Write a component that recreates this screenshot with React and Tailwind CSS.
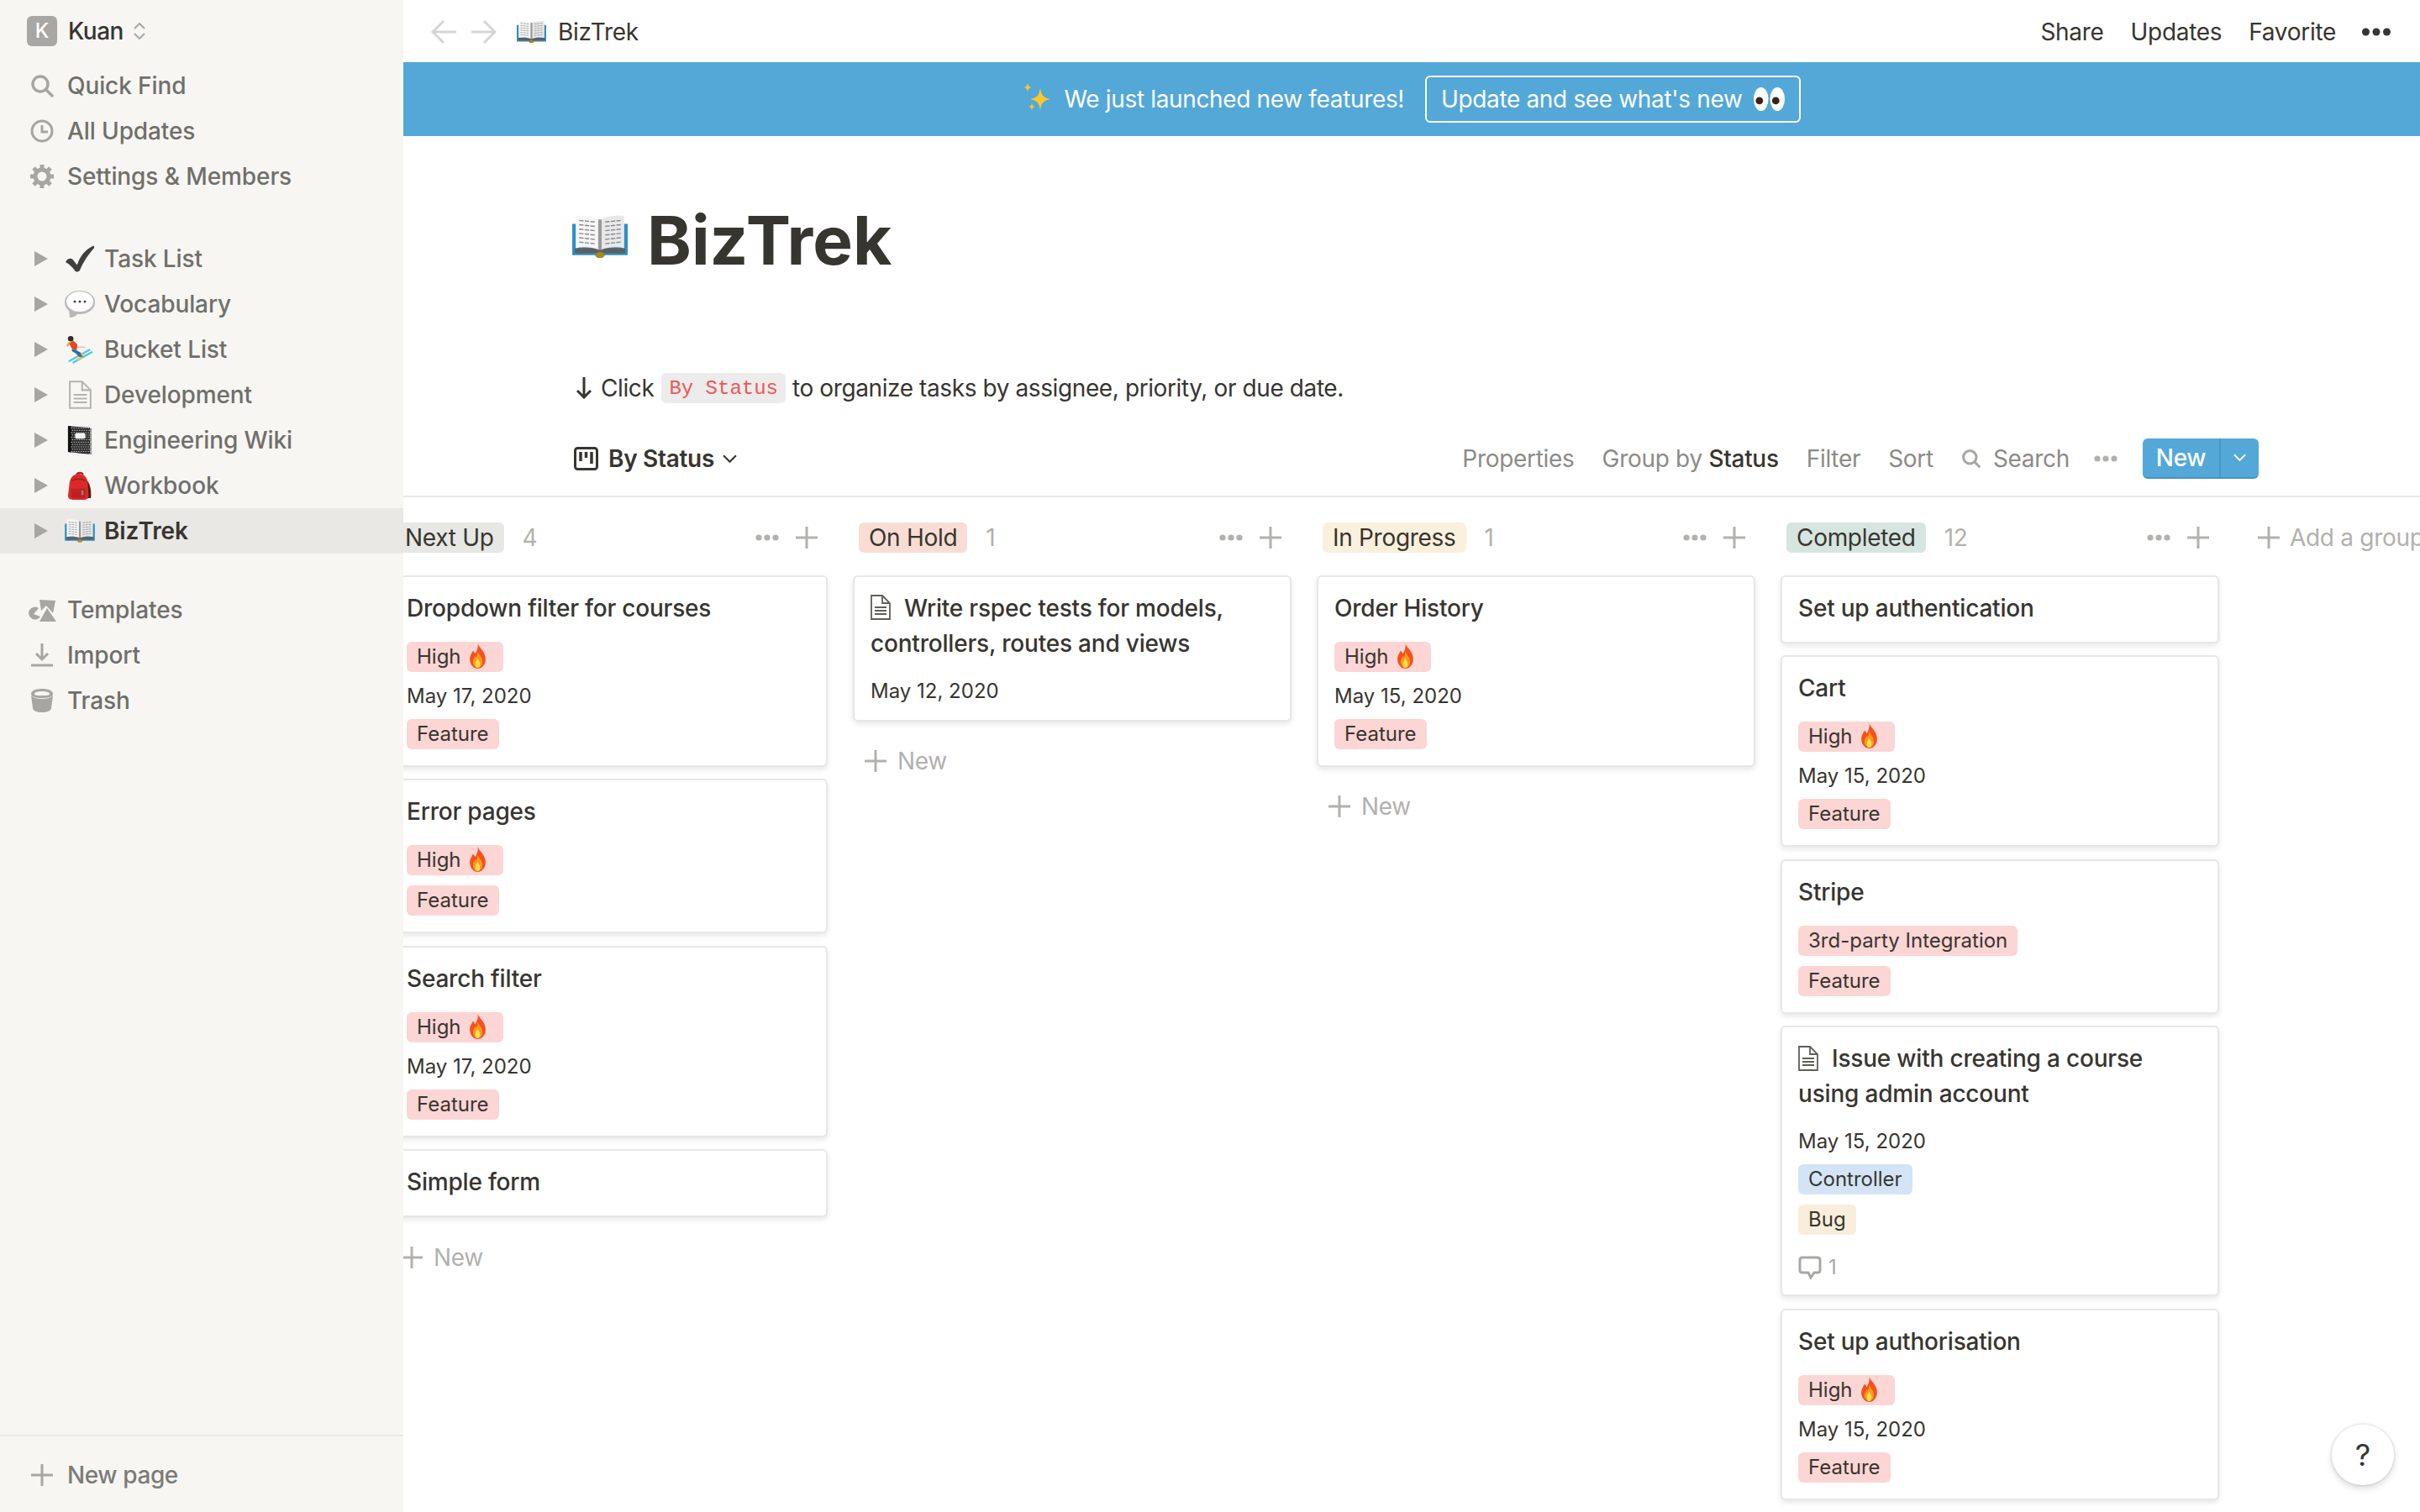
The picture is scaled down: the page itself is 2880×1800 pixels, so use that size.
import React from 'react'

const ink = '#37352f'

function Book({ className }) {
  return (
    <svg className={className} viewBox="0 0 64 52" fill="none">
      <path d="M0 10h64v36H38l-3 3h-6l-3-3H0z" fill="#2f8fc4" />
      <path d="M3 38h58v6H37l-2 1h-6l-2-1H3z" fill="#5f5f5f" />
      <path d="M4 1c9-1 20 0 27 4v35c-8-3-18-4-27-2z" fill="#f6f6f6" />
      <path d="M60 1c-9-1-20 0-27 4v35c8-3 18-4 27-2z" fill="#e8e8e8" />
      <path d="M30 5h4v35h-4z" fill="#9a9a9a" />
      <g stroke="#8a8a8a" strokeWidth="1.400" strokeDasharray="5 1.500">
        <path d="M8 6l19 2M8 11l19 2M8 16l19 2M8 21l19 2M8 26l19 2M8 31l19 2" />
        <path d="M56 6l-19 2M56 11l-19 2M56 16l-19 2M56 21l-19 2M56 26l-19 2M56 31l-19 2" />
      </g>
      <ellipse cx="32" cy="46" rx="5" ry="3.500" fill="#a88a1c" />
    </svg>
  )
}

function Sparkles({ className }) {
  return (
    <svg className={className} viewBox="0 0 34 44" fill="#fcc62d">
      <path d="M21 8c1 9 3 12 12 14-9 2-11 5-12 14-1-9-3-12-12-14 9-2 11-5 12-14z" />
      <path d="M6 2c.5 4 1.500 5.500 5 6-3.500.5-4.500 2-5 6-.5-4-1.500-5.500-5-6 3.500-.5 4.500-2 5-6z" />
      <path d="M11 26c.5 3.500 1.200 4.500 4 5-2.800.5-3.500 1.500-4 5-.5-3.500-1.200-4.500-4-5 2.800-.5 3.500-1.500 4-5z" />
    </svg>
  )
}

function Eyes({ className }) {
  return (
    <svg className={className} viewBox="0 0 38 30">
      <ellipse cx="9" cy="15" rx="9" ry="14.500" fill="#fff" />
      <ellipse cx="29" cy="15" rx="9" ry="14.500" fill="#fff" />
      <circle cx="7" cy="17" r="4.500" fill="#3b2412" />
      <circle cx="27" cy="17" r="4.500" fill="#3b2412" />
    </svg>
  )
}

function Fire({ className }) {
  return (
    <svg className={className} viewBox="0 0 24 32">
      <path d="M12 0c2 6 10 10 10 20 0 7-5 12-10 12S2 27 2 20c0-5 3-8 4-11 2 2 3 4 3 4 2-4 4-8 3-13z" fill="#f4511e" />
      <path d="M12 10c1 4 6 7 6 13 0 5-3 8-6 8s-6-3-6-8c0-3 2-5 3-7 1 1 1 2 1 2 1-2 2-5 2-8z" fill="#fb9a1c" />
      <path d="M12 19c1 3 3 4 3 7s-1.500 5-3 5-3-2-3-5 2-4 3-7z" fill="#ffe04a" />
    </svg>
  )
}

function Skier({ className }) {
  return (
    <svg className={className} viewBox="0 0 36 36">
      <path d="M4 33L31 18M9 35l25-14" stroke="#4fc8ec" strokeWidth="2.500" />
      <path d="M13 15h12" stroke="#d9b0a6" strokeWidth="1.200" />
      <circle cx="6.500" cy="4.500" r="3.500" fill="#2f2a28" />
      <path d="M4 10l6-3 5 5-1 7-6-2z" fill="#e4491f" />
      <path d="M8 17l6 2 5 3 3 5-4 1-5-5-5-3z" fill="#2f6ea8" />
      <path d="M2 14l3-5" stroke="#e9a33a" strokeWidth="2.500" />
      <path d="M14 30l6-3 1 2-5 3zM19 24l5-2 1 2-4 2z" fill="#f2c230" />
    </svg>
  )
}

function Backpack({ className }) {
  return (
    <svg className={className} viewBox="0 0 32 36">
      <path d="M12 4c1-3 7-3 8 0" fill="none" stroke="#9c1c1c" strokeWidth="2" />
      <path d="M24 10c5 5 7 14 6 24h-5z" fill="#5b1d12" />
      <path d="M3 14C4 7 9 3 15 3s10 4 11 11l1 17c0 3-2 5-5 5H7c-3 0-6-2-6-5z" fill="#d92a2a" />
      <path d="M6 12c5-3 12-3 17 0" fill="none" stroke="#a81c1c" strokeWidth="1.500" />
      <path d="M5 22h18v9c0 2-1 3-3 3H8c-2 0-3-1-3-3z" fill="#bf2020" />
      <rect x="18" y="24" width="2.500" height="6" fill="#8a8a8a" />
    </svg>
  )
}

function Notebook({ className }) {
  const specks = []
  for (let y = 2; y < 36; y += 3) {
    for (let x = 5 + (y % 2); x < 30; x += 3) {
      specks.push(<rect key={`${x}-${y}`} x={x} y={y} width="1.500" height="1" fill="#d8d8d8" />)
    }
  }
  return (
    <svg className={className} viewBox="0 0 32 36">
      <path d="M1 0l28 2v34L1 33z" fill="#2b2b2b" />
      <path d="M29 3h2v33h-2z" fill="#8d8d8d" />
      <path d="M1 0h4v33.500l-4-.5z" fill="#111" />
      {specks}
      <rect x="10" y="9" width="13" height="7" rx="2" fill="#f4f4f4" />
    </svg>
  )
}

function Speech({ className }) {
  return (
    <svg className={className} viewBox="0 0 36 32">
      <ellipse cx="18" cy="14" rx="18" ry="14" fill="#b9b9b9" />
      <path d="M5 22l1 10c4 0 8-2 10-5z" fill="#b9b9b9" />
      <ellipse cx="18" cy="13" rx="16" ry="12" fill="#fff" />
      <circle cx="12" cy="13" r="1.500" fill="#444" />
      <circle cx="18" cy="13" r="1.500" fill="#444" />
      <circle cx="24" cy="13" r="1.500" fill="#444" />
    </svg>
  )
}

function Check({ className }) {
  return (
    <svg className={className} viewBox="0 0 32 30">
      <path d="M1 17c3-3 6-3 8 0l4 5C16 12 22 5 30 1c2-1 3 1 2 2-6 7-12 15-16 25-1 2-4 2-5 1-3-4-6-7-9-9-2-1-2-2-1-3z" fill="#3f3f3f" />
    </svg>
  )
}

function Doc({ className, color = '#5f5e59', sw = 1.800 }) {
  return (
    <svg className={className} viewBox="0 0 24 30" fill="none" stroke={color} strokeWidth={sw}>
      <path d="M1 1h13l9 9v19H1z" />
      <path d="M14 1v9h9" />
      <path d="M5 15h14M5 19h14M5 23h14" />
    </svg>
  )
}

function Dots({ className = 'w-[28px] h-[8px]', fill = '#b2b1ad' }) {
  return (
    <svg className={className} viewBox="0 0 28 8" fill={fill}>
      <circle cx="4" cy="4" r="3.600" />
      <circle cx="14" cy="4" r="3.600" />
      <circle cx="24" cy="4" r="3.600" />
    </svg>
  )
}

function Plus({ className = 'w-[26px] h-[26px]', color = '#b2b1ad' }) {
  return (
    <svg className={className} viewBox="0 0 26 26" stroke={color} strokeWidth="3">
      <path d="M13 0v26M0 13h26" />
    </svg>
  )
}

function Chevron({ className, color = ink }) {
  return (
    <svg className={className} viewBox="0 0 16 10" fill="none" stroke={color} strokeWidth="2">
      <path d="M1 1l7 7 7-7" />
    </svg>
  )
}

const navIcons = {
  search: (
    <svg className="w-[28px] h-[28px]" viewBox="0 0 28 28" fill="none" stroke="#a7a6a2" strokeWidth="3.500">
      <circle cx="12" cy="12" r="9" />
      <path d="M18.500 18.500L26 26" strokeLinecap="round" />
    </svg>
  ),
  clock: (
    <svg className="w-[28px] h-[28px]" viewBox="0 0 28 28" fill="none" stroke="#a7a6a2" strokeWidth="3">
      <circle cx="14" cy="14" r="12" />
      <path d="M14 7v8h7" />
    </svg>
  ),
  gear: (
    <svg className="w-[28px] h-[28px]" viewBox="0 0 28 28" fill="none" stroke="#a7a6a2">
      <circle cx="14" cy="14" r="8" strokeWidth="5" />
      <path d="M14 0v5M14 23v5M0 14h5M23 14h5M4 4l3.500 3.500M20.500 20.500L24 24M24 4l-3.500 3.500M7.500 20.500L4 24" strokeWidth="5" />
    </svg>
  ),
  templates: (
    <svg className="w-[34px] h-[28px]" viewBox="0 0 34 28" fill="#a7a6a2">
      <path d="M14 2l19 1-3 15-8-9-6 6z" />
      <path d="M13 12a7.500 7.500 0 1 0 2 10l-8-3z" />
      <path d="M23 12l11 16H14z" />
    </svg>
  ),
  import: (
    <svg className="w-[28px] h-[28px]" viewBox="0 0 28 28" fill="none" stroke="#a7a6a2" strokeWidth="3">
      <path d="M14 0v19M7 12l7 7 7-7M1 26h26" />
    </svg>
  ),
  trash: (
    <svg className="w-[28px] h-[28px]" viewBox="0 0 28 28" fill="#a7a6a2">
      <path d="M1 8l2 15c0 3 5 5 11 5s11-2 11-5l2-15c-3 3-8 4-13 4S4 11 1 8z" />
      <path d="M14 0C7 0 1 2 1 6s6 5 13 5 13-1 13-5-6-6-13-6zm0 3c5 0 9 1 9 3s-4 2-9 2-9 0-9-2 4-3 9-3z" />
    </svg>
  ),
}

const pages = [
  { name: 'Task List', icon: <Check className="w-[34px] h-[32px]" /> },
  { name: 'Vocabulary', icon: <Speech className="w-[36px] h-[34px]" /> },
  { name: 'Bucket List', icon: <Skier className="w-[34px] h-[36px]" /> },
  { name: 'Development', icon: <Doc className="w-[27px] h-[34px]" color="#b5b4b0" sw={1.800} /> },
  { name: 'Engineering Wiki', icon: <Notebook className="w-[30px] h-[34px]" /> },
  { name: 'Workbook', icon: <Backpack className="w-[30px] h-[34px]" /> },
  { name: 'BizTrek', icon: <Book className="w-[36px] h-[29px]" />, active: true },
]

function NavRow({ icon, label }) {
  return (
    <div className="h-[54px] flex items-center pl-[32px] gap-[12px] text-[#706f6a]">
      <span className="w-[36px] flex justify-center">{navIcons[icon]}</span>
      <span>{label}</span>
    </div>
  )
}

function Sidebar() {
  return (
    <aside className="w-[480px] shrink-0 h-full bg-[#f7f6f3] flex flex-col font-medium text-[28px] tracking-[-0.1px]">
      <div className="h-[75px] shrink-0 flex items-center pl-[32px] pb-[1px]">
        <span className="w-[36px] h-[36px] rounded-[6px] bg-[#a8a7a3] text-white flex items-center justify-center text-[24px]">K</span>
        <span className="ml-[13px] text-[#37352f] tracking-[-0.5px]">Kuan</span>
        <svg className="ml-[12px] w-[14px] h-[20px]" viewBox="0 0 14 20" fill="none" stroke="#a7a6a2" strokeWidth="2">
          <path d="M1 7l6-6 6 6M1 13l6 6 6-6" />
        </svg>
      </div>
      <NavRow icon="search" label="Quick Find" />
      <NavRow icon="clock" label="All Updates" />
      <NavRow icon="gear" label="Settings & Members" />

      <div className="mt-[44px]">
        {pages.map((page) => (
          <div key={page.name} className={`h-[54px] flex items-center pl-[41px] ${page.active ? 'bg-[#e9e8e5] text-[#37352f] font-semibold' : 'text-[#706f6a]'}`}>
            <span className="w-0 h-0 border-y-[9px] border-y-transparent border-l-[16px] border-l-[#a7a6a2]" />
            <span className="ml-[20px] w-[36px] h-[36px] flex items-center justify-center">{page.icon}</span>
            <span className="ml-[11px]">{page.name}</span>
          </div>
        ))}
      </div>

      <div className="mt-[40px]">
        <NavRow icon="templates" label="Templates" />
        <NavRow icon="import" label="Import" />
        <NavRow icon="trash" label="Trash" />
      </div>

      <div className="mt-auto h-[92px] border-t-2 border-[#e8e7e4] flex items-center pl-[37px] pt-[2px] gap-[17px] text-[#7c7b77]">
        <Plus color="#a7a6a2" />
        <span className="tracking-[-0.4px]">New page</span>
      </div>
    </aside>
  )
}

function Tag({ color, children }) {
  return (
    <span className={`inline-flex items-center self-start h-[36px] rounded-[6px] px-[12px] text-[24px] text-[#37352f] ${color}`}>
      {children}
    </span>
  )
}

function High() {
  return (
    <Tag color="bg-[#fcd5d5]">
      High
      <Fire className="ml-[8px] mr-[7px] -mt-[2px] w-[23px] h-[30px]" />
    </Tag>
  )
}

const Feature = () => <Tag color="bg-[#fcd5d5]">Feature</Tag>
const DateRow = ({ children }) => <span className="h-[32px] pt-[2px] flex items-center text-[24px] text-[#37352f]">{children}</span>

function Card({ title, doc, children }) {
  return (
    <div className="shrink-0 rounded-[6px] border-2 border-[#e7e7e6] bg-white px-[19px] pt-[16px] pb-[19px] shadow-[0_3px_6px_rgba(15,15,15,0.1)]">
      <div className="text-[28px] leading-[42px] font-medium tracking-[-0.2px] text-[#37352f]">
        {doc && <Doc className="inline-block w-[24px] h-[30px] mr-[16px] -mt-[6px] align-middle" />}
        {title}
      </div>
      {children && <div className="mt-[19px] flex flex-col gap-[12px]">{children}</div>}
    </div>
  )
}

function Column({ label, color, count, children, newRow, className = 'w-[522px]' }) {
  return (
    <div className={`shrink-0 flex flex-col ${className}`}>
      <div className="h-[36px] pl-[7px] pr-[12px] flex items-center text-[28px] tracking-[-0.3px]">
        <span className={`h-[36px] rounded-[6px] px-[12px] flex items-center text-[#37352f] ${color}`}>{label}</span>
        <span className="ml-[22px] text-[#b2b1ad]">{count}</span>
        <span className="ml-auto flex items-center gap-[20px]">
          <Dots />
          <Plus />
        </span>
      </div>
      <div className="mt-[27px] flex flex-col gap-[14.4px]">{children}</div>
      {newRow && (
        <div className="h-[66px] mt-[14.4px] flex items-center pl-[14px] gap-[13px] text-[28px] tracking-[-0.3px] text-[#b2b1ad]">
          <Plus />
          <span>New</span>
        </div>
      )}
    </div>
  )
}

function Board() {
  return (
    <div className="flex gap-[30px] -ml-[17px] mt-[30px] flex-1 min-h-0">
      <Column label="Next Up" color="bg-[#e7e7e5]" count="4" newRow>
        <Card title="Dropdown filter for courses">
          <High />
          <DateRow>May 17, 2020</DateRow>
          <Feature />
        </Card>
        <Card title="Error pages">
          <High />
          <Feature />
        </Card>
        <Card title="Search filter">
          <High />
          <DateRow>May 17, 2020</DateRow>
          <Feature />
        </Card>
        <Card title="Simple form" />
      </Column>

      <Column label="On Hold" color="bg-[#f9ddd4]" count="1" newRow>
        <Card doc title="Write rspec tests for models, controllers, routes and views">
          <DateRow>May 12, 2020</DateRow>
        </Card>
      </Column>

      <Column label="In Progress" color="bg-[#faf0dd]" count="1" newRow>
        <Card title="Order History">
          <High />
          <DateRow>May 15, 2020</DateRow>
          <Feature />
        </Card>
      </Column>

      <Column label="Completed" color="bg-[#d6e5e0]" count="12">
        <Card title="Set up authentication" />
        <Card title="Cart">
          <High />
          <DateRow>May 15, 2020</DateRow>
          <Feature />
        </Card>
        <Card title="Stripe">
          <Tag color="bg-[#fcd5d5]">3rd-party Integration</Tag>
          <Feature />
        </Card>
        <Card doc title="Issue with creating a course using admin account">
          <DateRow>May 15, 2020</DateRow>
          <Tag color="bg-[#d3e4f6]">Controller</Tag>
          <Tag color="bg-[#f9eedb]">Bug</Tag>
          <div className="mt-[14px] h-[26px] flex items-center gap-[8px] text-[24px] text-[#a9a8a4]">
            <svg className="w-[28px] h-[28px]" viewBox="0 0 28 28" fill="none" stroke="#a9a8a4" strokeWidth="3">
              <path d="M5 2h18c2 0 3 1 3 3v12c0 2-1 3-3 3h-4l-4 6-3-6H5c-2 0-3-1-3-3V5c0-2 1-3 3-3z" />
            </svg>
            1
          </div>
        </Card>
        <Card title="Set up authorisation">
          <High />
          <DateRow>May 15, 2020</DateRow>
          <Feature />
        </Card>
        <div className="h-[100px] shrink-0 rounded-[6px] border-2 border-[#e7e7e6] bg-white" />
      </Column>

      <div className="shrink-0 ml-[16px] h-[36px] flex items-center gap-[12px] text-[28px] tracking-[-0.3px] text-[#b2b1ad]">
        <Plus />
        <span>Add a group</span>
      </div>
    </div>
  )
}

function Main() {
  return (
    <main className="flex-1 min-w-0 h-full flex flex-col overflow-hidden relative">
      <header className="h-[74px] shrink-0 pt-[2px] flex items-center pl-[33px] pr-[34px] text-[28px] tracking-[-0.3px] text-[#37352f]">
        <svg className="w-[30px] h-[28px]" viewBox="0 0 30 28" fill="none" stroke="#d7d6d4" strokeWidth="3">
          <path d="M30 14H3M15 1L2 14l13 13" />
        </svg>
        <svg className="ml-[18px] w-[30px] h-[28px]" viewBox="0 0 30 28" fill="none" stroke="#d7d6d4" strokeWidth="3">
          <path d="M0 14h27M15 1l13 13-13 13" />
        </svg>
        <Book className="ml-[24px] w-[35px] h-[29px]" />
        <span className="ml-[14px]">BizTrek</span>
        <div className="ml-auto flex items-center gap-[32px]">
          <span>Share</span>
          <span>Updates</span>
          <span>Favorite</span>
          <Dots className="ml-[-2px] w-[36px] h-[10px]" fill="#37352f" />
        </div>
      </header>

      <div className="h-[88px] shrink-0 bg-[#53a8d8] flex items-center justify-center text-[28px] tracking-[-0.35px] text-white">
        <Sparkles className="w-[34px] h-[44px]" />
        <span className="ml-[16px]">We just launched new features!</span>
        <span className="ml-[25px] h-[56px] rounded-[6px] border-2 border-white flex items-center pl-[17px] pr-[17px]">
          Update and see what's new
          <Eyes className="ml-[14px] w-[37px] h-[30px]" />
        </span>
      </div>

      <div className="shrink-0 pl-[200px] pr-[192px] text-[#37352f]">
        <h1 className="mt-[76px] h-[96px] flex items-center text-[80px] font-bold">
          <Book className="w-[66px] h-[54px] -mt-[6px] ml-[1px]" />
          <span className="ml-[23px]">BizTrek</span>
        </h1>
        <div className="mt-[107px] h-[42px] pl-[6px] flex items-center text-[28px] tracking-[-0.4px]">
          <svg className="w-[18px] h-[26px]" viewBox="0 0 18 26" fill="none" stroke="#37352f" strokeWidth="3">
            <path d="M9 0v24M1 16l8 8 8-8" />
          </svg>
          <span className="ml-[11px]">Click</span>
          <code className="ml-[9px] h-[36px] pt-[2px] rounded-[6px] bg-[#ebeceb] px-[9px] flex items-center [font-family:'Liberation_Mono',monospace] text-[24px] tracking-normal text-[#eb5757]">By Status</code>
          <span className="ml-[8px]">to organize tasks by assignee, priority, or due date.</span>
        </div>
        <div className="mt-[39px] h-[48px] pl-[3px] flex items-center text-[28px] tracking-[-0.3px] text-[#8c8b87]">
          <svg className="w-[29px] h-[28px]" viewBox="0 0 29 28" fill="none" stroke="#37352f" strokeWidth="3">
            <rect x="1.500" y="1.500" width="26" height="25" rx="3" />
            <path d="M8 6v11M14.500 6v7M21 6v14" strokeWidth="3.500" />
          </svg>
          <span className="ml-[12px] font-semibold text-[#37352f]">By Status</span>
          <Chevron className="ml-[10px] w-[17px] h-[11px]" />
          <div className="ml-auto flex items-center gap-[33px]">
            <span>Properties</span>
            <span>Group by <span className="text-[#37352f] font-medium">Status</span></span>
            <span>Filter</span>
            <span>Sort</span>
            <span className="flex items-center gap-[14px]">
              <svg className="w-[24px] h-[24px]" viewBox="0 0 28 28" fill="none" stroke="#a7a6a2" strokeWidth="3.500">
                <circle cx="12" cy="12" r="9" />
                <path d="M18.500 18.500L26 26" />
              </svg>
              Search
            </span>
            <Dots className="-ml-[4px] w-[28px] h-[8px]" />
            <div className="-ml-[3px] h-[48px] w-[138px] rounded-[6px] bg-[#53a8d8] border-b-2 border-[#4696c6] flex items-center font-medium text-white">
              <span className="w-[91px] text-center">New</span>
              <span className="h-full flex-1 border-l-2 border-[#4696c6] flex items-center justify-center">
                <Chevron className="w-[15px] h-[10px]" color="#fff" />
              </span>
            </div>
          </div>
        </div>
      </div>

      <div className="shrink-0 mt-[20px] h-[2px] bg-[#e8e8e6]" />

      <Board />

      <button className="absolute right-[31px] bottom-[32px] w-[74px] h-[72px] rounded-full bg-white text-[36px] text-[#37352f] shadow-[0_0_0_2px_rgba(15,15,15,0.05),0_4px_8px_rgba(15,15,15,0.15)]">?</button>
    </main>
  )
}

export default function App() {
  return (
    <div className="w-[2880px] h-[1800px] flex overflow-hidden bg-white antialiased [font-family:Inter,sans-serif]">
      <Sidebar />
      <Main />
    </div>
  )
}
